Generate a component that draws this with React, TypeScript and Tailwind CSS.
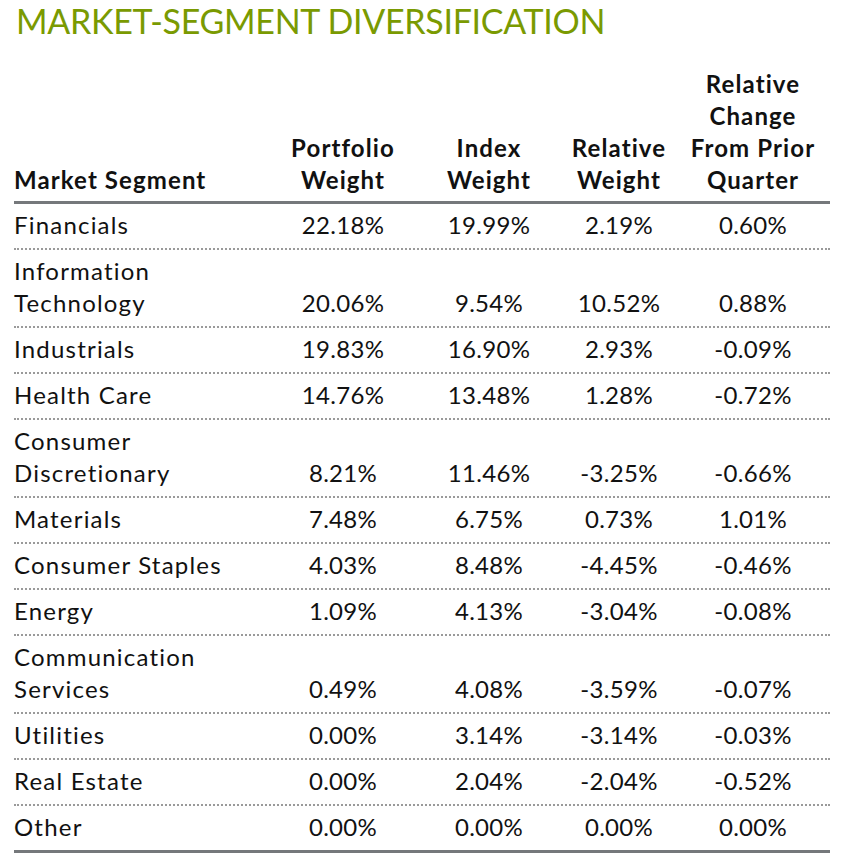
const rows: [string[], string, string, string, string][] = [
  [['Financials'], '22.18%', '19.99%', '2.19%', '0.60%'],
  [['Information', 'Technology'], '20.06%', '9.54%', '10.52%', '0.88%'],
  [['Industrials'], '19.83%', '16.90%', '2.93%', '-0.09%'],
  [['Health Care'], '14.76%', '13.48%', '1.28%', '-0.72%'],
  [['Consumer', 'Discretionary'], '8.21%', '11.46%', '-3.25%', '-0.66%'],
  [['Materials'], '7.48%', '6.75%', '0.73%', '1.01%'],
  [['Consumer Staples'], '4.03%', '8.48%', '-4.45%', '-0.46%'],
  [['Energy'], '1.09%', '4.13%', '-3.04%', '-0.08%'],
  [['Communication', 'Services'], '0.49%', '4.08%', '-3.59%', '-0.07%'],
  [['Utilities'], '0.00%', '3.14%', '-3.14%', '-0.03%'],
  [['Real Estate'], '0.00%', '2.04%', '-2.04%', '-0.52%'],
  [['Other'], '0.00%', '0.00%', '0.00%', '0.00%'],
];

const cols = 'grid grid-cols-[256px_146px_146px_114px_154px] items-end';

const App = () => {
  return (
    <div className="bg-white w-[841px] h-[858px] pl-[14px] pt-[1px] text-[#111] font-['Lato','Noto_Sans',sans-serif]">
      <h1 className="text-[#7a9a01] text-[34px] leading-[40px] tracking-[-0.3px] pl-[2px] font-normal">
        MARKET-SEGMENT DIVERSIFICATION
      </h1>

      <div className="w-[816px] mt-[27px]">
        <div className={`${cols} font-bold text-[24px] leading-[32px] tracking-[1.1px] border-b-[3px] border-[#75787b] pb-[5px]`}>
          <div>Market Segment</div>
          <div className="text-center">Portfolio<br />Weight</div>
          <div className="text-center">Index<br />Weight</div>
          <div className="text-center">Relative<br />Weight</div>
          <div className="text-center">Relative<br />Change<br />From Prior<br />Quarter</div>
        </div>

        {rows.map((r, i) => (
          <div
            key={i}
            className={`${cols} text-[24px] leading-[32px] tracking-[0.3px] pt-[5px] pb-[7px] ${
              i === rows.length - 1
                ? 'border-b-[3px] border-solid border-[#75787b]'
                : 'border-b-2 border-dotted border-[#9a9a9a]'
            }`}
          >
            <div className="tracking-[1.2px]">
              {r[0].map((l, j) => (
                <div key={j}>{l}</div>
              ))}
            </div>
            <div className="text-center">{r[1]}</div>
            <div className="text-center">{r[2]}</div>
            <div className="text-center">{r[3]}</div>
            <div className="text-center">{r[4]}</div>
          </div>
        ))}
      </div>
    </div>
  );
};

export default App;
